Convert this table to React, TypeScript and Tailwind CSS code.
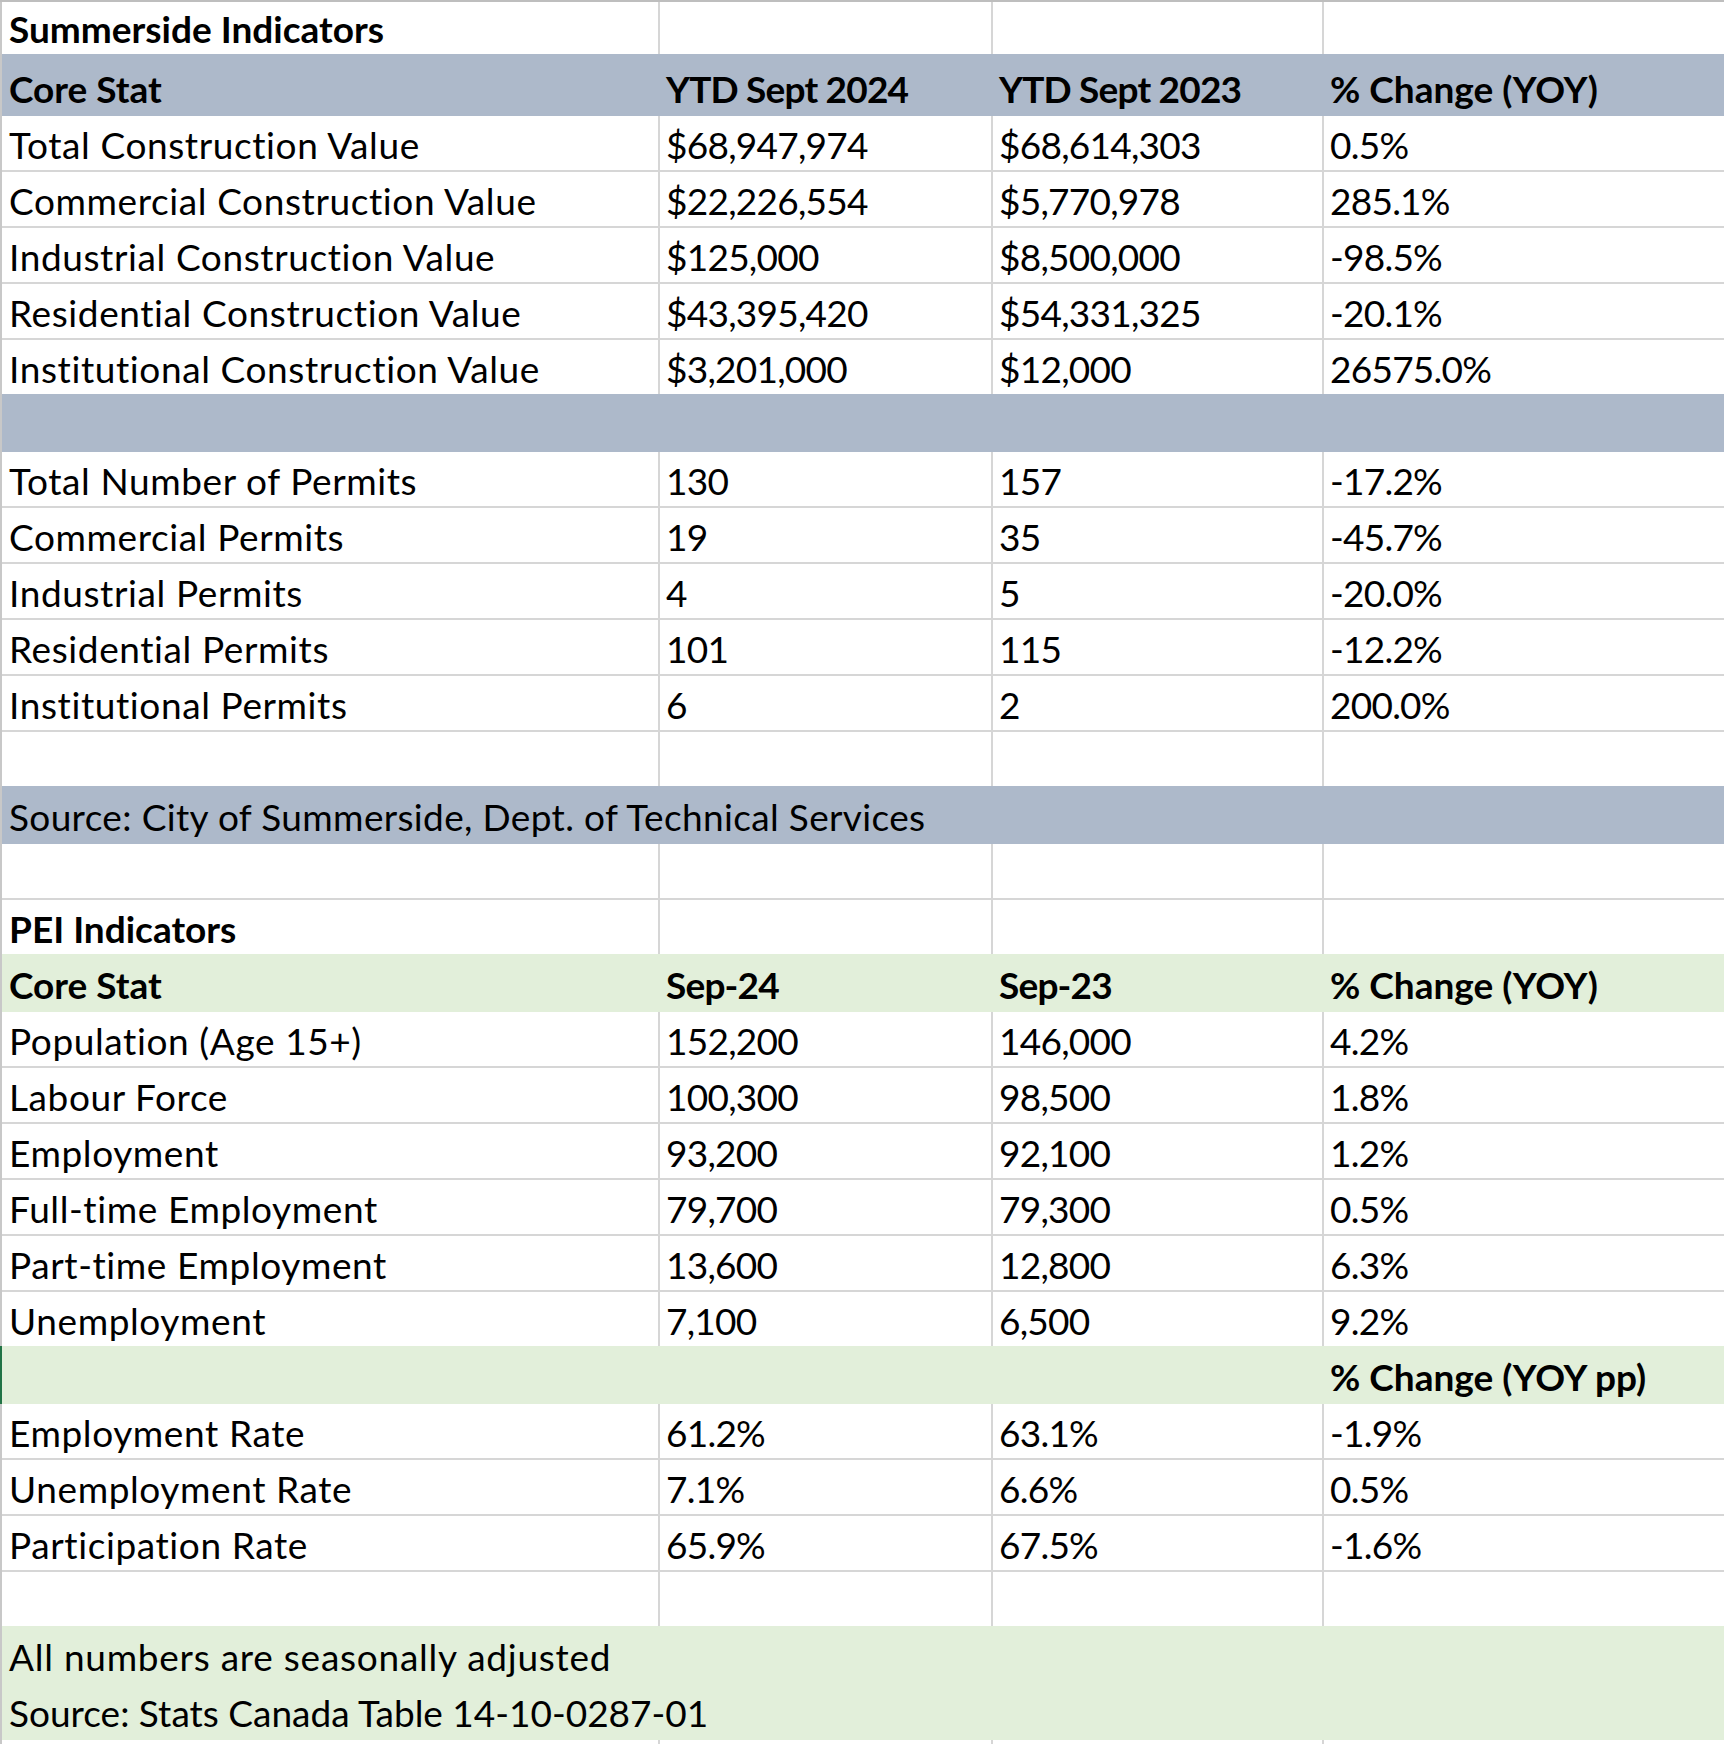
type Fill = 'white' | 'gray' | 'green';

interface Row {
  fill: Fill;
  cells: string[];
  bold?: boolean;
  span?: boolean;
  mark?: boolean;
  tall?: boolean;
  track?: string;
}

const rows: Row[] = [
  { fill: 'white', cells: ['Summerside Indicators', '', '', ''], bold: true },
  { fill: 'gray', cells: ['Core Stat', 'YTD Sept 2024', 'YTD Sept 2023', '% Change (YOY)'], bold: true, tall: true },
  { fill: 'white', cells: ['Total Construction Value', '$68,947,974', '$68,614,303', '0.5%'] },
  { fill: 'white', cells: ['Commercial Construction Value', '$22,226,554', '$5,770,978', '285.1%'] },
  { fill: 'white', cells: ['Industrial Construction Value', '$125,000', '$8,500,000', '-98.5%'] },
  { fill: 'white', cells: ['Residential Construction Value', '$43,395,420', '$54,331,325', '-20.1%'] },
  { fill: 'white', cells: ['Institutional Construction Value', '$3,201,000', '$12,000', '26575.0%'] },
  { fill: 'gray', cells: ['', '', '', ''] },
  { fill: 'white', cells: ['Total Number of Permits', '130', '157', '-17.2%'] },
  { fill: 'white', cells: ['Commercial Permits', '19', '35', '-45.7%'] },
  { fill: 'white', cells: ['Industrial Permits', '4', '5', '-20.0%'] },
  { fill: 'white', cells: ['Residential Permits', '101', '115', '-12.2%'] },
  { fill: 'white', cells: ['Institutional Permits', '6', '2', '200.0%'] },
  { fill: 'white', cells: ['', '', '', ''] },
  { fill: 'gray', cells: ['Source: City of Summerside, Dept. of Technical Services'], span: true, track: 'tracking-[0.35px]' },
  { fill: 'white', cells: ['', '', '', ''] },
  { fill: 'white', cells: ['PEI Indicators', '', '', ''], bold: true },
  { fill: 'green', cells: ['Core Stat', 'Sep-24', 'Sep-23', '% Change (YOY)'], bold: true },
  { fill: 'white', cells: ['Population (Age 15+)', '152,200', '146,000', '4.2%'] },
  { fill: 'white', cells: ['Labour Force', '100,300', '98,500', '1.8%'] },
  { fill: 'white', cells: ['Employment', '93,200', '92,100', '1.2%'] },
  { fill: 'white', cells: ['Full-time Employment', '79,700', '79,300', '0.5%'] },
  { fill: 'white', cells: ['Part-time Employment', '13,600', '12,800', '6.3%'] },
  { fill: 'white', cells: ['Unemployment', '7,100', '6,500', '9.2%'] },
  { fill: 'green', cells: ['', '', '', '% Change (YOY pp)'], bold: true, mark: true },
  { fill: 'white', cells: ['Employment Rate', '61.2%', '63.1%', '-1.9%'] },
  { fill: 'white', cells: ['Unemployment Rate', '7.1%', '6.6%', '0.5%'] },
  { fill: 'white', cells: ['Participation Rate', '65.9%', '67.5%', '-1.6%'] },
  { fill: 'white', cells: ['', '', '', ''] },
  { fill: 'green', cells: ['All numbers are seasonally adjusted'], span: true, track: 'tracking-[0.75px]' },
  { fill: 'green', cells: ['Source: Stats Canada Table 14-10-0287-01'], span: true, track: 'tracking-[0px]' },
];

const widths = ['w-[658px]', 'w-[333px]', 'w-[331px]', 'flex-1'];

// Lato stands in for Calibri: letters run a bit narrow, digits a bit wide
function tracking(col: number, bold?: boolean) {
  if (bold) return col === 1 || col === 2 ? 'tracking-[-0.8px]' : '';
  return col === 0 ? 'tracking-[0.6px]' : 'tracking-[-0.75px]';
}

function WhiteRow({ row, first }: { row: Row; first: boolean }) {
  return (
    <div className={`flex border-l-2 border-[#C8C8C8] ${first ? 'h-[54px]' : 'h-[56px]'}`}>
      {row.cells.map((text, i) => (
        <div
          key={i}
          className={`${widths[i]} flex items-end overflow-visible whitespace-nowrap border-b-2 border-[#D6D6D6] pb-[7px] ${i === 0 ? 'pl-[7px]' : 'pl-[6px]'} ${i < 3 ? 'border-r-2' : ''} ${row.bold ? 'font-bold' : ''} ${tracking(i, row.bold)}`}
        >
          {text}
        </div>
      ))}
    </div>
  );
}

function FilledRow({ row }: { row: Row }) {
  const bg = row.fill === 'gray' ? 'bg-[#ADB9CA]' : 'bg-[#E2EFDA]';
  const edge = row.mark ? 'border-[#217346]' : 'border-[#C8C8C8]';
  return (
    <div className={`-mt-[2px] flex border-l-2 ${edge} ${bg} ${row.tall ? 'h-[62px]' : 'h-[58px]'}`}>
      {row.span ? (
        <div className={`flex flex-1 items-end whitespace-nowrap pb-[9px] pl-[7px] ${row.track}`}>{row.cells[0]}</div>
      ) : (
        row.cells.map((text, i) => (
          <div
            key={i}
            className={`${widths[i]} flex items-end whitespace-nowrap pb-[9px] ${i === 0 ? 'pl-[7px]' : 'pl-[6px]'} ${row.bold ? 'font-bold' : ''} ${tracking(i, row.bold)}`}
          >
            {text}
          </div>
        ))
      )}
    </div>
  );
}

export default function App() {
  return (
    <div className="flex h-[1744px] w-[1724px] flex-col overflow-hidden border-t-2 border-[#BEBEBE] bg-white font-['Lato','Liberation_Sans',sans-serif] text-[37px] leading-none text-black">
      {rows.map((row, idx) =>
        row.fill === 'white' ? (
          <WhiteRow key={idx} row={row} first={idx === 0} />
        ) : (
          <FilledRow key={idx} row={row} />
        ),
      )}
      <div className="flex flex-1 border-l-2 border-[#C8C8C8]">
        <div className="w-[658px] border-r-2 border-[#D6D6D6]" />
        <div className="w-[333px] border-r-2 border-[#D6D6D6]" />
        <div className="w-[331px] border-r-2 border-[#D6D6D6]" />
        <div className="flex-1" />
      </div>
    </div>
  );
}
